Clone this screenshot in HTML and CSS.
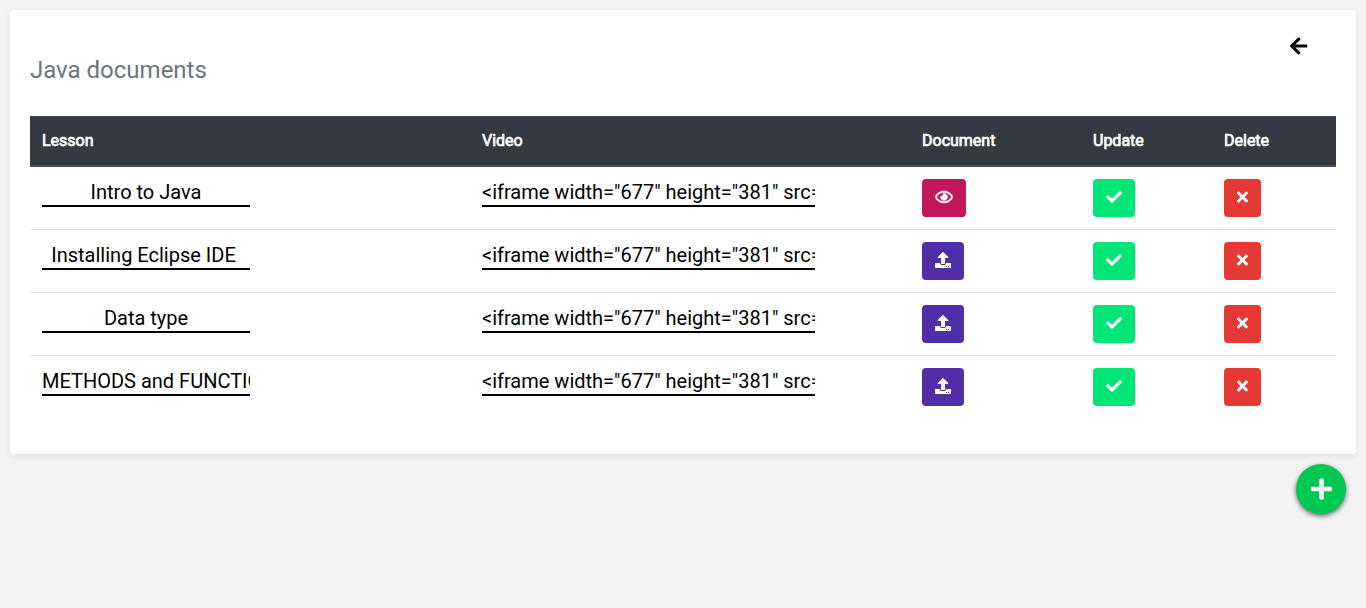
FILE: index.html
```html
<!DOCTYPE html>
<html lang="en">
<head>
<meta charset="utf-8">
<title>Java documents</title>
<link rel="stylesheet" href="styles.css">
</head>
<body>
<svg class="sprite" aria-hidden="true">
  <symbol id="eye" viewBox="0 0 576 512"><path d="M288 144a110.94 110.94 0 0 0-31.24 5 55.4 55.4 0 0 1 7.24 27 56 56 0 0 1-56 56 55.4 55.4 0 0 1-27-7.24A111.71 111.71 0 1 0 288 144zm284.52 97.4C518.29 135.59 410.93 64 288 64S57.68 135.64 3.48 241.41a32.35 32.35 0 0 0 0 29.19C57.71 376.41 165.07 448 288 448s230.32-71.64 284.52-177.4a32.35 32.35 0 0 0 0-29.19zM288 400c-98.65 0-189.09-55-237.93-144C98.91 167 189.34 112 288 112s189.09 55 237.93 144C477.1 345 386.66 400 288 400z"/></symbol>
  <symbol id="upload" viewBox="0 0 512 512"><path d="M296 384h-80c-13.3 0-24-10.7-24-24V192h-87.700c-17.8 0-26.700-21.5-14.1-34.1L242.3 5.700c7.5-7.5 19.8-7.5 27.3 0l152.2 152.2c12.6 12.6 3.7 34.1-14.1 34.1H320v168c0 13.3-10.7 24-24 24zm216-8v112c0 13.3-10.7 24-24 24H24c-13.3 0-24-10.7-24-24V376c0-13.3 10.7-24 24-24h136v8c0 30.9 25.1 56 56 56h80c30.900 0 56-25.1 56-56v-8h136c13.3 0 24 10.7 24 24zm-124 88c0-11-9-20-20-20s-20 9-20 20 9 20 20 20 20-9 20-20zm64 0c0-11-9-20-20-20s-20 9-20 20 9 20 20 20 20-9 20-20z"/></symbol>
  <symbol id="check" viewBox="0 0 512 512"><path d="M173.898 439.404l-166.4-166.4c-9.997-9.997-9.997-26.206 0-36.204l36.203-36.204c9.997-9.998 26.207-9.998 36.204 0L192 312.69 432.095 72.596c9.997-9.997 26.207-9.997 36.204 0l36.203 36.204c9.997 9.997 9.997 26.206 0 36.204l-294.4 294.401c-9.998 9.997-26.207 9.997-36.204-.001z"/></symbol>
  <symbol id="times" viewBox="0 0 352 512"><path d="M242.72 256l100.07-100.07c12.28-12.28 12.28-32.19 0-44.48l-22.24-22.24c-12.28-12.28-32.19-12.28-44.48 0L176 189.28 75.93 89.21c-12.28-12.28-32.19-12.28-44.48 0L9.21 111.45c-12.28 12.28-12.28 32.19 0 44.48L109.28 256 9.21 356.07c-12.28 12.28-12.28 32.19 0 44.48l22.24 22.24c12.28 12.28 32.2 12.28 44.48 0L176 322.72l100.07 100.07c12.28 12.28 32.2 12.28 44.48 0l22.24-22.24c12.28-12.28 12.28-32.19 0-44.48L242.72 256z"/></symbol>
  <symbol id="plus" viewBox="0 0 448 512"><path d="M416 208H272V64c0-17.67-14.33-32-32-32h-32c-17.67 0-32 14.33-32 32v144H32c-17.67 0-32 14.33-32 32v32c0 17.67 14.33 32 32 32h144v144c0 17.67 14.33 32 32 32h32c17.67 0 32-14.33 32-32V304h144c17.67 0 32-14.33 32-32v-32c0-17.67-14.33-32-32-32z"/></symbol>
  <symbol id="back" viewBox="0 0 448 512"><path d="M257.5 445.1l-22.2 22.2c-9.4 9.4-24.6 9.4-33.9 0L7 273c-9.4-9.4-9.4-24.6 0-33.9L201.4 44.7c9.4-9.4 24.6-9.4 33.9 0l22.2 22.2c9.5 9.5 9.3 25-.4 34.3L136.6 216H424c13.3 0 24 10.7 24 24v32c0 13.3-10.7 24-24 24H136.6l120.5 114.8c9.8 9.3 10 24.8.4 34.3z"/></symbol>
</svg>
<main class="card">
  <header class="card-head">
    <h1 class="title">Java documents</h1>
    <a class="back"><svg class="icon-back"><use href="#back"/></svg></a>
  </header>
  <section class="table">
    <div class="row head"><span>Lesson</span><span>Video</span><span>Document</span><span>Update</span><span>Delete</span></div>
    <div class="row">
      <div class="field lesson">Intro to Java</div>
      <div class="field video">&lt;iframe width="677" height="381" src="</div>
      <a class="btn pink"><svg class="icon wide"><use href="#eye"/></svg></a>
      <a class="btn green"><svg class="icon"><use href="#check"/></svg></a>
      <a class="btn red"><svg class="icon slim"><use href="#times"/></svg></a>
    </div>
    <div class="row">
      <div class="field lesson">Installing Eclipse IDE </div>
      <div class="field video">&lt;iframe width="677" height="381" src="</div>
      <a class="btn purple"><svg class="icon"><use href="#upload"/></svg></a>
      <a class="btn green"><svg class="icon"><use href="#check"/></svg></a>
      <a class="btn red"><svg class="icon slim"><use href="#times"/></svg></a>
    </div>
    <div class="row">
      <div class="field lesson">Data type</div>
      <div class="field video">&lt;iframe width="677" height="381" src="</div>
      <a class="btn purple"><svg class="icon"><use href="#upload"/></svg></a>
      <a class="btn green"><svg class="icon"><use href="#check"/></svg></a>
      <a class="btn red"><svg class="icon slim"><use href="#times"/></svg></a>
    </div>
    <div class="row">
      <div class="field lesson long">METHODS and FUNCTIONS</div>
      <div class="field video">&lt;iframe width="677" height="381" src="</div>
      <a class="btn purple"><svg class="icon"><use href="#upload"/></svg></a>
      <a class="btn green"><svg class="icon"><use href="#check"/></svg></a>
      <a class="btn red"><svg class="icon slim"><use href="#times"/></svg></a>
    </div>
  </section>
</main>
<a class="add"><svg class="icon-add"><use href="#plus"/></svg></a>
</body>
</html>
```
FILE: styles.css
```css
* { box-sizing: border-box; }
body {
  margin: 0;
  padding: 10px;
  display: flex;
  flex-direction: column;
  background: #f3f3f3;
  font-family: Roboto, sans-serif;
  color: #000;
}
.sprite { display: none; }
svg { display: block; fill: currentColor; }
.card {
  height: 444px;
  padding: 0 20px;
  background: #fff;
  border-radius: 4px;
  box-shadow: 0 2px 6px rgba(0, 0, 0, .08);
}
.card-head {
  display: flex;
  justify-content: space-between;
  height: 106px;
}
.title {
  margin: 46px 0 0;
  font-size: 24px;
  line-height: 29px;
  font-weight: 400;
  color: #6c757d;
}
.back { padding: 25.5px 28.5px 0 0; }
.icon-back { width: 17.5px; height: 20px; }
.row {
  display: grid;
  grid-template-columns: 440px 440px 171px 131px 1fr;
  align-items: start;
  height: 63px;
  padding: 12px 12px 0;
  border-top: 1px solid #dee2e6;
}
.head {
  height: 51px;
  color: #fff;
  background: #343a40;
  border-top: 1px solid #454d55;
  border-bottom: 2px solid #454d55;
  font-size: 16px;
  font-weight: 400;
  line-height: 24px;
  -webkit-text-stroke: .7px #fff;
}
.head + .row { height: 62px; border-top: 0; }
.field {
  height: 28px;
  border-bottom: 2px solid #000;
  font-size: 20px;
  line-height: 26px;
  white-space: pre;
  overflow: hidden;
}
.lesson { width: 208px; text-align: center; }
.long { text-align: left; }
.video { width: 333px; }
.btn {
  justify-self: start;
  height: 38px;
  padding: 10px 13px;
  border-radius: 4px;
  color: #fff;
}
.icon { width: 16px; height: 16px; }
.wide { width: 18px; stroke: currentColor; stroke-width: 14px; }
.slim { width: 11px; }
.pink { background: #c2185b; }
.purple { background: #512da8; }
.green { background: #00e676; }
.red { background: #e53935; }
.add {
  align-self: flex-end;
  width: 50px;
  height: 50px;
  margin: 10px 10px 0 0;
  padding: 12.5px 0 0 14.5px;
  border-radius: 50%;
  color: #fff;
  background: #00c853;
  box-shadow: 0 2px 5px rgba(0, 0, 0, .6);
}
.icon-add { width: 21px; height: 24px; }
```
